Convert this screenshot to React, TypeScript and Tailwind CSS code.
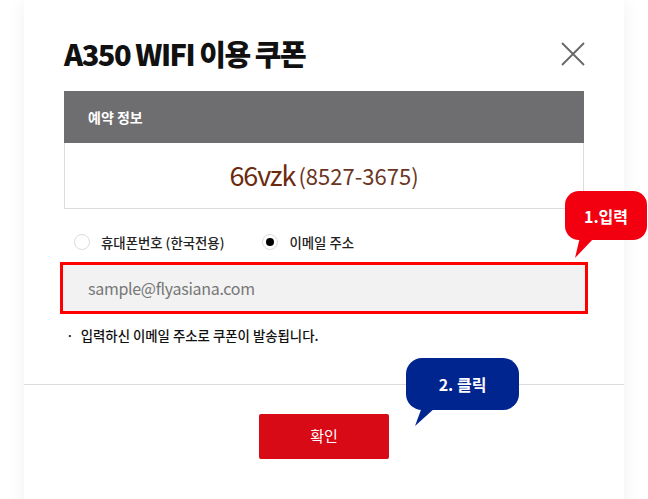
import { FC } from "react";

const font = { fontFamily: '"Noto Sans CJK KR", "Noto Sans", sans-serif' };

const Radio: FC<{ checked?: boolean; label: string }> = ({ checked, label }) => (
  <label className="flex items-center gap-[11px] text-[13.4px] font-medium text-[#222]">
    <span className="flex h-[16px] w-[16px] items-center justify-center rounded-full border border-[#dcdcdc] bg-white">
      {checked && <span className="h-[8px] w-[8px] rounded-full bg-black" />}
    </span>
    {label}
  </label>
);

export default function App() {
  return (
    <div className="relative h-[499px] w-[648px] overflow-hidden bg-white" style={font}>
      <div className="ml-[24px] w-[600px] bg-white shadow-[0_0_18px_rgba(0,0,0,0.06)]">
        <div className="px-[40px] pt-[34px]">
          <div className="flex h-[40px] items-center justify-between">
            <h1 className="text-[29px] font-extrabold tracking-[-1.5px] text-[#111]">
              A350 WIFI 이용 쿠폰
            </h1>
            <button className="mr-[-1px] h-[24px] w-[24px]">
              <svg viewBox="0 0 24 24" width="24" height="24">
                <path d="M1 1L23 23M23 1L1 23" stroke="#666" strokeWidth="1.8" fill="none" />
              </svg>
            </button>
          </div>

          <div className="mt-[17px] flex h-[52px] items-center bg-[#6e6e70] px-[24px] text-[14px] font-bold text-white">
            예약 정보
          </div>
          <div className="flex h-[66px] items-center justify-center gap-[3px] border border-t-0 border-[#dcdcdc] text-[#6b2a0e]">
            <span className="text-[27px] tracking-[-1px]">66vzk</span>
            <span className="text-[22px] text-[#6b3524]">(8527-3675)</span>
          </div>

          <div className="mt-[23px] flex h-[20px] items-center gap-[38px] pl-[10px]">
            <Radio label="휴대폰번호 (한국전용)" />
            <Radio checked label="이메일 주소" />
          </div>

          <div className="mx-[-4px] mt-[10px] flex h-[52px] items-center border-[3px] border-[#ff0000] bg-[#f2f2f2] px-[25px] text-[16px] tracking-[-0.3px] text-[#777]">
            sample@flyasiana.com
          </div>

          <p className="mt-[12px] flex h-[18px] items-center gap-[7px] pl-[2px] text-[13.4px] font-medium text-[#111]">
            <span>·</span>입력하신 이메일 주소로 쿠폰이 발송됩니다.
          </p>
        </div>

        <div className="mt-[40px] border-t border-[#dcdcdc] pb-[60px] pt-[29px]">
          <div className="flex justify-center">
            <button className="h-[45px] w-[130px] rounded-[2px] bg-[#d70a16] text-[15px] text-white">
              확인
            </button>
          </div>
        </div>
      </div>

      {/* 1. input callout */}
      <div className="absolute left-[565px] top-[191px]">
        <div className="flex h-[49px] w-[82px] items-center justify-center rounded-[14px] bg-[#f2000f] text-[16px] font-bold text-white">
          1.입력
        </div>
        <svg className="absolute left-[8px] top-[46px]" width="30" height="22" viewBox="0 0 30 22">
          <path d="M7 0L22 0L2 21Z" fill="#f2000f" />
        </svg>
      </div>

      {/* 2. click callout */}
      <div className="absolute left-[406px] top-[358px]">
        <div className="flex h-[52px] w-[113px] items-center justify-center rounded-[16px] bg-[#00258f] text-[16px] font-bold text-white">
          2. 클릭
        </div>
        <svg className="absolute left-[8px] top-[49px]" width="30" height="20" viewBox="0 0 30 20">
          <path d="M8 0L22 0L1 19Z" fill="#00258f" />
        </svg>
      </div>
    </div>
  );
}
